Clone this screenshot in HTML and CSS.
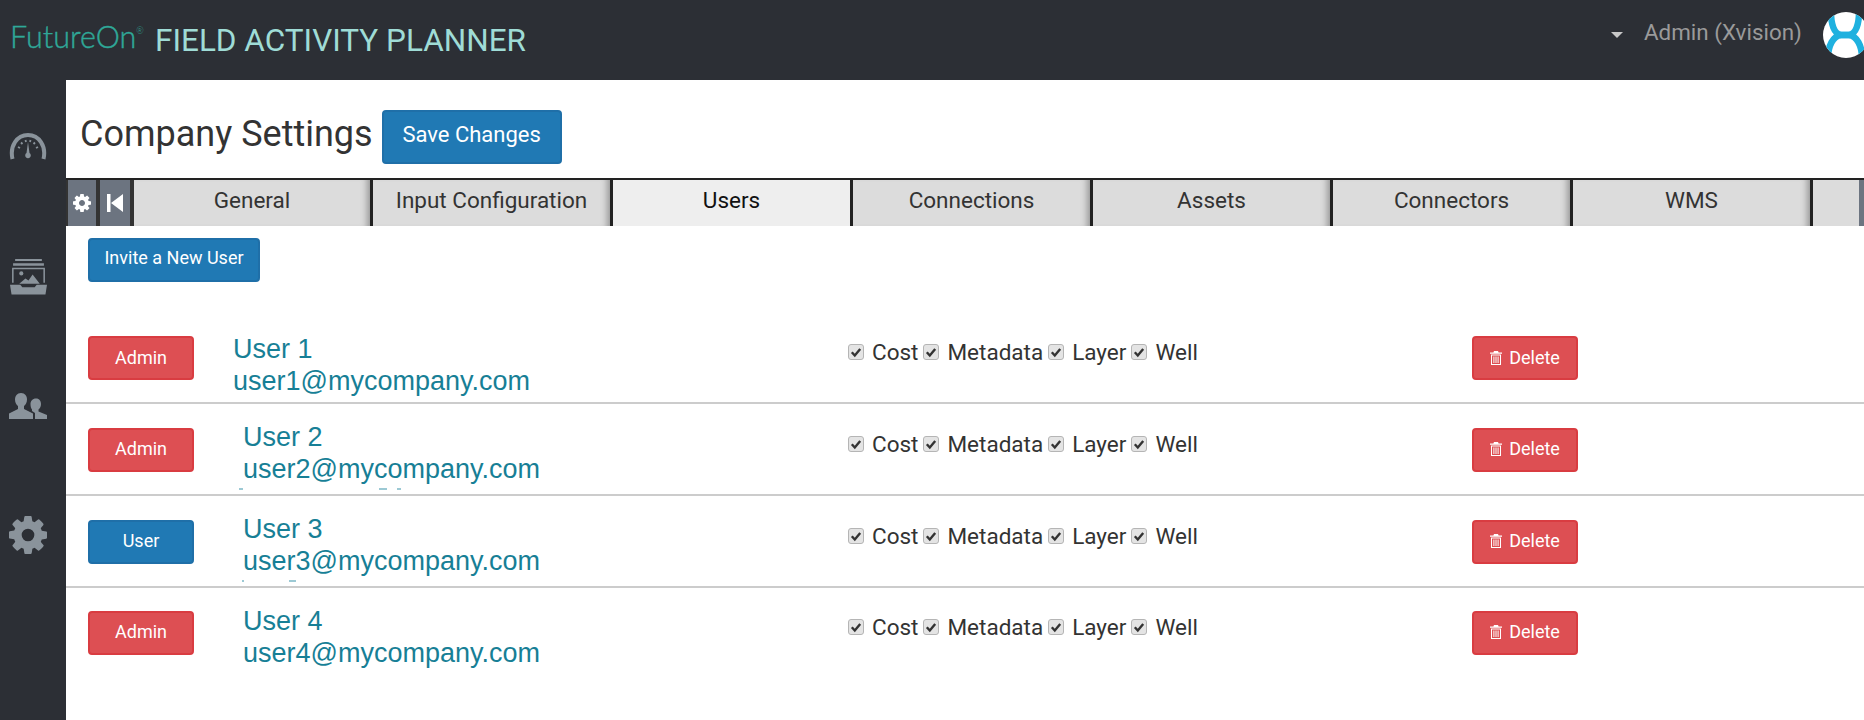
FILE: index.html
```html
<!DOCTYPE html>
<html lang="en">
<head>
<meta charset="utf-8">
<title>Company Settings</title>
<link rel="stylesheet" href="styles.css">
</head>
<body>
<svg class="defs" width="0" height="0" aria-hidden="true">
  <symbol id="gear" viewBox="128 128 1536 1536"><path d="M1152 896q0-106-75-181t-181-75-181 75-75 181 75 181 181 75 181-75 75-181zm512-109v222q0 12-8 23t-20 13l-185 28q-19 54-39 91 35 50 107 138 10 12 10 25t-9 23q-27 37-99 108t-94 71q-12 0-26-9l-138-108q-44 23-91 38-16 136-29 186-7 28-36 28h-222q-14 0-24.500-8.500t-11.500-21.500l-28-184q-49-16-90-37l-141 107q-10 9-25 9-14 0-25-11-126-114-165-168-7-10-7-23 0-12 8-23 15-21 51-66.500t54-70.500q-27-50-41-99l-183-27q-13-2-21-12.500t-8-23.500v-222q0-12 8-23t19-13l186-28q14-46 39-92-40-57-107-138-10-12-10-24 0-10 9-23 26-36 98.500-107.500t94.500-71.500q13 0 26 10l138 107q44-23 91-38 16-136 29-186 7-28 36-28h222q14 0 24.500 8.500t11.500 21.500l28 184q49 16 90 37l142-107q9-9 24-9 13 0 25 10 129 119 165 170 7 8 7 22 0 12-8 23-15 21-51 66.500t-54 70.500q26 50 41 98l183 28q13 2 21 12.500t8 23.500z"/></symbol>
  <symbol id="check" viewBox="0 0 12 12"><path d="M1.800 6.200 4.800 9.500 10.200 3" fill="none" stroke="#333" stroke-width="2.400"/></symbol>
  <symbol id="trash" viewBox="0 0 12 14"><path fill-rule="evenodd" d="M4 0h4l.6 1.600H12v1.200H0V1.600h3.400zM1 3.600h10V14H1zM2 4.600v8.400h8V4.600zM3.400 5.600h1v6.400h-1zM5.500 5.600h1v6.400h-1zM7.600 5.600h1v6.400h-1z"/></symbol>
  <clipPath id="avatar-clip"><circle cx="23" cy="23" r="23"/></clipPath>
</svg>
<div class="app">
  <header class="topbar">
    <div class="brand">
      <span class="logo">FutureOn<sup>®</sup></span>
      <span class="product">FIELD ACTIVITY PLANNER</span>
    </div>
    <div class="account">
      <span class="caret"></span>
      <span class="account-name">Admin (Xvision)</span>
      <svg class="avatar" viewBox="0 0 46 46" aria-hidden="true">
        <circle cx="23" cy="23" r="23" fill="#fff"/>
        <g clip-path="url(#avatar-clip)" fill="none" stroke="#1fb1df" stroke-width="6.500">
          <path d="M8 0C8 12 11 22 18 23H26C33 22 36 12 36 0"/>
          <path d="M5 46C5 34 10 24 18 23H26C34 24 39 34 39 46"/>
        </g>
      </svg>
    </div>
  </header>
  <div class="body">
    <nav class="sidebar">
      <svg class="nav-icon nav-gauge" viewBox="0 0 38 28" aria-hidden="true">
        <path d="M3.500 27C.5 14 8 3 19 3s18.500 11 15.500 24" fill="none" stroke="#8a939b" stroke-width="4"/>
        <path d="M9 15l2 1M12 10.500l1.500 1.500M16.500 8l.5 2M21.500 8l-.5 2M26 10.500l-1.500 1.500M29 15l-2 1" stroke="#8a939b" stroke-width="1.800"/>
        <path d="M19 10l1.500 11a2.800 2.800 0 1 1-3 0z" fill="#8a939b"/>
      </svg>
      <svg class="nav-icon nav-inbox" viewBox="0 0 36 36" aria-hidden="true">
        <path d="M5 1h26v2H5zM3 5h30v2.500H3z" fill="#8a939b"/>
        <path d="M2 9.500h32V24h-1.500V11h-29V24H2z" fill="#8a939b"/>
        <path d="M0 26h10l2 2.500h12l2-2.500h10l-1.500 9.500H1.500z" fill="#8a939b"/>
        <circle cx="11" cy="15" r="2" fill="#8a939b"/>
        <path d="M9 25l6-5 3 2 4-6 7 9z" fill="#8a939b"/>
      </svg>
      <svg class="nav-icon nav-users" viewBox="0 0 38 26" aria-hidden="true">
        <path d="M12 0c4 0 6 3 6 6.500 0 3-1.500 5.500-3 6.500v3l9 4.500V26H0v-5.500L9 16v-3C7.500 12 6 9.500 6 6.500 6 3 8 0 12 0z" fill="#8a939b"/>
        <path d="M27 5.500c3.500 0 5 2.500 5 5.500 0 2.500-1 4.500-2.500 5.500v2L38 22v4H26v-6l-3-2v-1.500C22 15.500 21.500 13.500 21.500 11c0-3 2-5.500 5.500-5.500z" fill="#8a939b"/>
      </svg>
      <svg class="nav-icon nav-gear" aria-hidden="true"><use href="#gear" fill="#8a939b"/></svg>
    </nav>
    <main class="content">
      <div class="title-row">
        <h1 class="title">Company Settings</h1>
        <button class="btn btn-blue btn-save">Save Changes</button>
      </div>
      <div class="tabs">
        <span class="tool tool-first"><svg class="tool-gear" aria-hidden="true"><use href="#gear" fill="#fff"/></svg></span>
        <span class="tool tool-second"><svg class="tool-back" viewBox="0 0 16 18" aria-hidden="true"><path d="M0 0h3.500v18H0zM16 0v18L4 9z" fill="#fff"/></svg></span>
        <span class="tab tab-first">General</span>
        <span class="tab">Input Configuration</span>
        <span class="tab tab-active">Users</span>
        <span class="tab">Connections</span>
        <span class="tab">Assets</span>
        <span class="tab">Connectors</span>
        <span class="tab">WMS</span>
        <span class="tab tab-stub"></span>
        <span class="tab-end"></span>
      </div>
      <div class="invite"><button class="btn btn-blue btn-invite">Invite a New User</button></div>
      <div class="users">
        <div class="user-row row-first">
          <button class="btn btn-red btn-role">Admin</button>
          <div class="identity"><div>User 1</div><div>user1@mycompany.com</div></div>
          <div class="perms">
            <label class="perm"><span class="box"><svg><use href="#check"/></svg></span>Cost</label>
            <label class="perm"><span class="box"><svg><use href="#check"/></svg></span>Metadata</label>
            <label class="perm"><span class="box"><svg><use href="#check"/></svg></span>Layer</label>
            <label class="perm"><span class="box"><svg><use href="#check"/></svg></span>Well</label>
          </div>
          <button class="btn btn-red btn-delete"><svg class="trash"><use href="#trash"/></svg>Delete</button>
        </div>
        <div class="user-row">
          <button class="btn btn-red btn-role">Admin</button>
          <div class="identity identity-shift"><div>User 2</div><div>user2@mycompany.com</div><div class="specks specks-a"></div></div>
          <div class="perms">
            <label class="perm"><span class="box"><svg><use href="#check"/></svg></span>Cost</label>
            <label class="perm"><span class="box"><svg><use href="#check"/></svg></span>Metadata</label>
            <label class="perm"><span class="box"><svg><use href="#check"/></svg></span>Layer</label>
            <label class="perm"><span class="box"><svg><use href="#check"/></svg></span>Well</label>
          </div>
          <button class="btn btn-red btn-delete"><svg class="trash"><use href="#trash"/></svg>Delete</button>
        </div>
        <div class="user-row">
          <button class="btn btn-blue btn-role">User</button>
          <div class="identity identity-shift"><div>User 3</div><div>user3@mycompany.com</div><div class="specks specks-b"></div></div>
          <div class="perms">
            <label class="perm"><span class="box"><svg><use href="#check"/></svg></span>Cost</label>
            <label class="perm"><span class="box"><svg><use href="#check"/></svg></span>Metadata</label>
            <label class="perm"><span class="box"><svg><use href="#check"/></svg></span>Layer</label>
            <label class="perm"><span class="box"><svg><use href="#check"/></svg></span>Well</label>
          </div>
          <button class="btn btn-red btn-delete"><svg class="trash"><use href="#trash"/></svg>Delete</button>
        </div>
        <div class="user-row row-last">
          <button class="btn btn-red btn-role">Admin</button>
          <div class="identity identity-shift"><div>User 4</div><div>user4@mycompany.com</div></div>
          <div class="perms">
            <label class="perm"><span class="box"><svg><use href="#check"/></svg></span>Cost</label>
            <label class="perm"><span class="box"><svg><use href="#check"/></svg></span>Metadata</label>
            <label class="perm"><span class="box"><svg><use href="#check"/></svg></span>Layer</label>
            <label class="perm"><span class="box"><svg><use href="#check"/></svg></span>Well</label>
          </div>
          <button class="btn btn-red btn-delete"><svg class="trash"><use href="#trash"/></svg>Delete</button>
        </div>
      </div>
    </main>
  </div>
</div>
</body>
</html>
```

FILE: styles.css
```css
* { box-sizing: border-box; }
html, body { margin: 0; height: 100%; overflow: hidden; background: #fff; }
body { font-family: Roboto, "Liberation Sans", sans-serif; color: #333; }
.defs { display: block; height: 0; }
.app { width: 1864px; height: 720px; display: flex; flex-direction: column; }

.topbar { height: 80px; flex: none; background: #2c2f35; display: flex; align-items: center; justify-content: space-between; overflow: hidden; }
.brand { display: flex; align-items: center; padding-left: 10px; }
.logo { font-family: Lato, sans-serif; font-weight: 300; font-size: 30.500px; color: #2fa898; -webkit-text-stroke: .4px #2fa898; width: 145px; margin-top: -8px; }
.logo sup { font-size: 9px; vertical-align: 14px; line-height: 0; -webkit-text-stroke: 0; }
.product { font-size: 31.500px; color: #9fdcd6; line-height: 40px; margin-top: 1px; }
.account { display: flex; align-items: center; width: 267px; height: 80px; flex: none; margin-right: -4px; padding-left: 10px; }
.caret { width: 0; height: 0; border-left: 6px solid transparent; border-right: 6px solid transparent; border-top: 6px solid #c8c8c8; margin-right: 21px; margin-top: -10px; }
.account-name { font-size: 22.400px; color: #9a9a9a; white-space: nowrap; margin-top: -16px; }
.avatar { width: 46px; height: 46px; flex: none; margin-left: 21px; margin-top: -10px; }

.body { flex: 1; display: flex; min-height: 0; }
.sidebar { width: 66px; flex: none; background: #2c2f35; padding-right: 10px; display: flex; flex-direction: column; align-items: center; }
.nav-icon { display: block; flex: none; }
.nav-gauge { width: 38px; height: 28px; margin-top: 52px; }
.nav-inbox { width: 37px; height: 37px; margin-top: 98px; }
.nav-users { width: 38px; height: 26px; margin-top: 98px; }
.nav-gear { width: 38px; height: 38px; margin-top: 97px; }

.content { flex: 1; min-width: 0; overflow: hidden; }
.title-row { height: 98px; display: flex; align-items: flex-start; padding: 30px 0 0 14px; }
.title { margin: 1px 0 0; font-size: 36px; font-weight: 400; line-height: 46px; color: #333; }
.btn { font-family: inherit; color: #fff; border-radius: 4px; border: 2px solid; cursor: pointer; padding: 0; display: inline-flex; align-items: center; justify-content: center; }
.btn-blue { background: #2079b4; border-color: #1f6fa8; }
.btn-red { background: #dd4f53; border-color: #d93c41; }
.btn-save { width: 180px; height: 54px; font-size: 22px; margin-left: 9px; padding-bottom: 5px; }

.tabs { height: 48px; display: flex; border-top: 2px solid #222; width: 1798px; background: #333; }
.tool { background: #6c7480; display: flex; align-items: center; justify-content: center; flex: none; }
.tool-first { width: 28px; margin: 0 4px 0 2px; }
.tool-second { width: 30px; margin-right: 4px; }
.tool-gear { width: 18px; height: 18px; }
.tool-back { width: 16px; height: 18px; }
.tab { width: 240px; flex: none; background: #dcdcdc; border-right: 3px solid #222; box-shadow: inset -8px 0 6px -5px #999; display: flex; align-items: center; justify-content: center; font-size: 22.500px; color: #333; padding-bottom: 7px; }
.tab-first { width: 239px; }
.tab-active { background: #eee; color: #111; box-shadow: none; }
.tab-stub { width: 46px; border-right: none; box-shadow: none; }
.tab-end { flex: 1; background: #6c7480; }

.invite { padding: 12px 0 0 22px; height: 84px; }
.btn-invite { width: 172px; height: 44px; font-size: 18px; padding-bottom: 5px; }

.users { display: flex; flex-direction: column; }
.user-row { height: 92px; border-bottom: 2px solid #ccc; display: flex; align-items: flex-start; padding: 24px 0 0 22px; }
.row-first { height: 94px; padding-top: 26px; }
.row-last { border-bottom: none; padding-top: 23px; }
.btn-role, .btn-delete { width: 106px; height: 44px; font-size: 18px; flex: none; padding-bottom: 3px; }
.row-first .btn-role, .row-first .btn-delete { padding-bottom: 1px; }
.identity { width: 615px; flex: none; margin-left: 39px; font-family: "Liberation Sans", Arial, sans-serif; font-size: 27px; line-height: 32px; color: #177f96; margin-top: -3px; }
.identity-shift { margin-left: 49px; width: 605px; margin-top: -7px; }
.row-last .identity-shift { margin-top: -6px; }
.specks { height: 2px; margin-top: 3px; width: 170px; margin-left: -6px; }
.specks-a { background: linear-gradient(to right, transparent 2px, #9cc9d4 2px, #9cc9d4 6px, transparent 6px, transparent 142px, #9cc9d4 142px, #9cc9d4 150px, transparent 150px, transparent 160px, #9cc9d4 160px, #9cc9d4 164px, transparent 164px); }
.specks-b { background: linear-gradient(to right, transparent 5px, #9cc9d4 5px, #9cc9d4 7px, transparent 7px, transparent 52px, #9cc9d4 52px, #9cc9d4 59px, transparent 59px); }
.perms { width: 624px; flex: none; display: flex; gap: 5px; font-size: 22.500px; line-height: 30px; color: #333; margin-top: 1px; }
.perm { display: inline-flex; align-items: center; }
.box { width: 16px; height: 16px; border: 1px solid #b5b5b5; border-radius: 3px; background: #e4e4e4; margin-right: 8px; display: inline-flex; align-items: center; justify-content: center; }
.box svg { width: 12px; height: 12px; }
.trash { width: 12px; height: 14px; fill: #fff; margin-right: 7px; }
```
